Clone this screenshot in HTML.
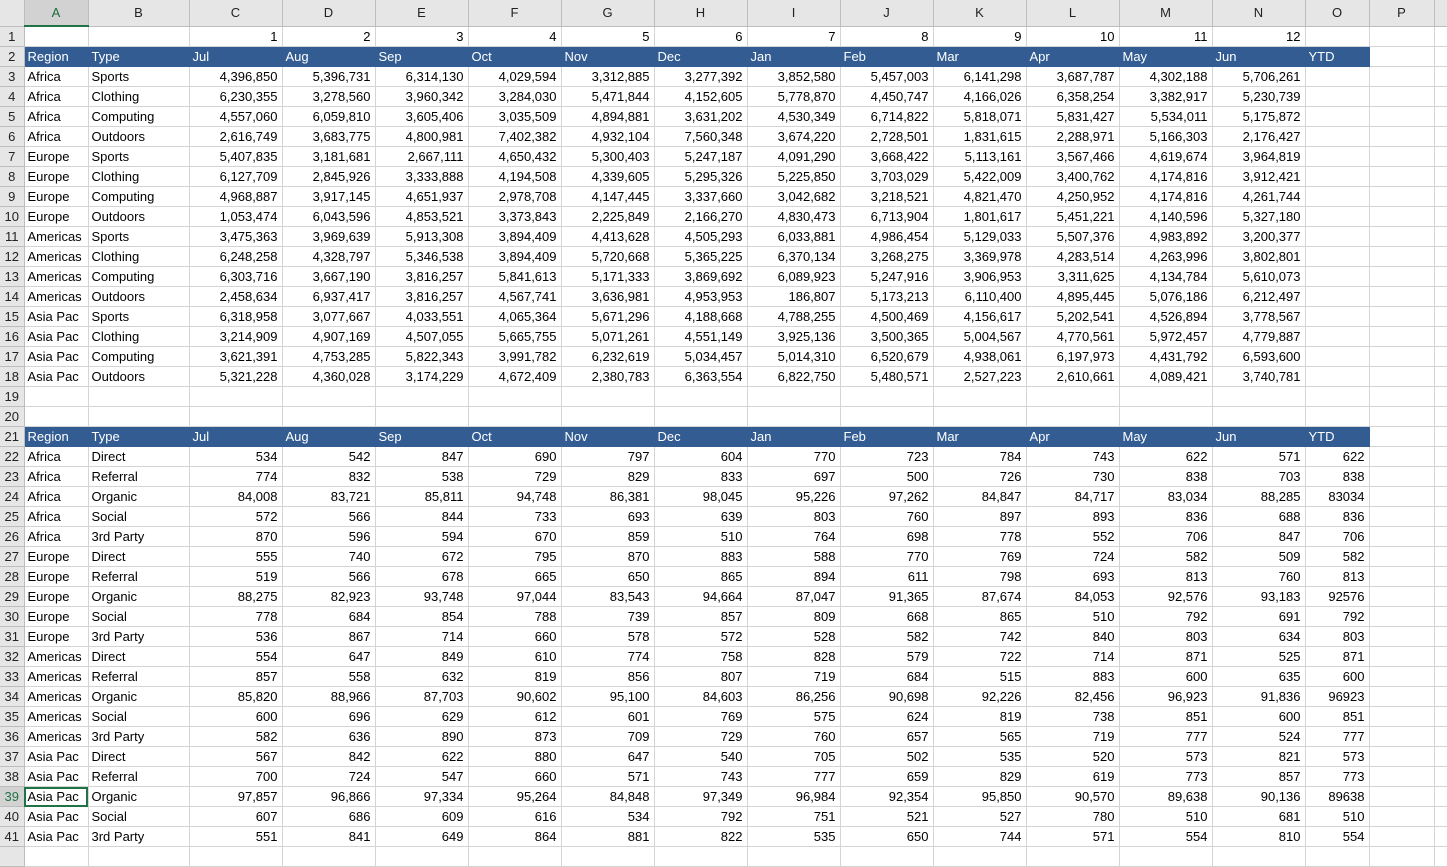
<!DOCTYPE html>
<html><head><meta charset="utf-8"><style>
body{margin:0;width:1447px;height:849px;overflow:hidden;background:#fff;font-family:"Liberation Sans",Arial,sans-serif;font-size:13px;color:#000}
table{border-collapse:collapse;table-layout:fixed;position:absolute;left:0;top:0}
td{height:19px;padding:0 4px;border-right:1px solid #d4d4d4;border-bottom:1px solid #d4d4d4;white-space:nowrap;overflow:hidden;text-align:right;line-height:19px}
td.l{text-align:left;padding-left:3px}
tr.h td{background:#335d92;color:#fff;text-align:left;padding-left:3px;border-color:#335d92}
tr.h td.e{background:#fff;border-color:#d4d4d4}
tr.ch td{height:25px;background:#e6e6e6;text-align:center;border-color:#bdbdbd;color:#222;font-size:13px}
tr.ch td.sel{background:#d2d2d2;color:#1e6b3a;border-bottom:2px solid #217346}
td.rh, tr.h td.rh{background:#e6e6e6;text-align:center;padding:0;border-color:#bdbdbd;color:#222}
td.rs{background:#d2d2d2;color:#217346}
td.x{border-right:none}
</style></head><body>
<table>
<colgroup><col style="width:24px"><col style="width:64px"><col style="width:101px"><col style="width:93px"><col style="width:93px"><col style="width:93px"><col style="width:93px"><col style="width:93px"><col style="width:93px"><col style="width:93px"><col style="width:93px"><col style="width:93px"><col style="width:93px"><col style="width:93px"><col style="width:93px"><col style="width:64px"><col style="width:65px"><col style="width:13px"></colgroup>
<tr class="ch"><td></td><td class="sel">A</td><td>B</td><td>C</td><td>D</td><td>E</td><td>F</td><td>G</td><td>H</td><td>I</td><td>J</td><td>K</td><td>L</td><td>M</td><td>N</td><td>O</td><td>P</td><td class="x"></td></tr>
<tr><td class="rh">1</td><td></td><td></td><td>1</td><td>2</td><td>3</td><td>4</td><td>5</td><td>6</td><td>7</td><td>8</td><td>9</td><td>10</td><td>11</td><td>12</td><td></td><td></td><td class="x"></td></tr>
<tr class="h"><td class="rh">2</td><td>Region</td><td>Type</td><td>Jul</td><td>Aug</td><td>Sep</td><td>Oct</td><td>Nov</td><td>Dec</td><td>Jan</td><td>Feb</td><td>Mar</td><td>Apr</td><td>May</td><td>Jun</td><td>YTD</td><td class="e"></td><td class="e x"></td></tr>
<tr><td class="rh">3</td><td class="l">Africa</td><td class="l">Sports</td><td>4,396,850</td><td>5,396,731</td><td>6,314,130</td><td>4,029,594</td><td>3,312,885</td><td>3,277,392</td><td>3,852,580</td><td>5,457,003</td><td>6,141,298</td><td>3,687,787</td><td>4,302,188</td><td>5,706,261</td><td></td><td></td><td class="x"></td></tr>
<tr><td class="rh">4</td><td class="l">Africa</td><td class="l">Clothing</td><td>6,230,355</td><td>3,278,560</td><td>3,960,342</td><td>3,284,030</td><td>5,471,844</td><td>4,152,605</td><td>5,778,870</td><td>4,450,747</td><td>4,166,026</td><td>6,358,254</td><td>3,382,917</td><td>5,230,739</td><td></td><td></td><td class="x"></td></tr>
<tr><td class="rh">5</td><td class="l">Africa</td><td class="l">Computing</td><td>4,557,060</td><td>6,059,810</td><td>3,605,406</td><td>3,035,509</td><td>4,894,881</td><td>3,631,202</td><td>4,530,349</td><td>6,714,822</td><td>5,818,071</td><td>5,831,427</td><td>5,534,011</td><td>5,175,872</td><td></td><td></td><td class="x"></td></tr>
<tr><td class="rh">6</td><td class="l">Africa</td><td class="l">Outdoors</td><td>2,616,749</td><td>3,683,775</td><td>4,800,981</td><td>7,402,382</td><td>4,932,104</td><td>7,560,348</td><td>3,674,220</td><td>2,728,501</td><td>1,831,615</td><td>2,288,971</td><td>5,166,303</td><td>2,176,427</td><td></td><td></td><td class="x"></td></tr>
<tr><td class="rh">7</td><td class="l">Europe</td><td class="l">Sports</td><td>5,407,835</td><td>3,181,681</td><td>2,667,111</td><td>4,650,432</td><td>5,300,403</td><td>5,247,187</td><td>4,091,290</td><td>3,668,422</td><td>5,113,161</td><td>3,567,466</td><td>4,619,674</td><td>3,964,819</td><td></td><td></td><td class="x"></td></tr>
<tr><td class="rh">8</td><td class="l">Europe</td><td class="l">Clothing</td><td>6,127,709</td><td>2,845,926</td><td>3,333,888</td><td>4,194,508</td><td>4,339,605</td><td>5,295,326</td><td>5,225,850</td><td>3,703,029</td><td>5,422,009</td><td>3,400,762</td><td>4,174,816</td><td>3,912,421</td><td></td><td></td><td class="x"></td></tr>
<tr><td class="rh">9</td><td class="l">Europe</td><td class="l">Computing</td><td>4,968,887</td><td>3,917,145</td><td>4,651,937</td><td>2,978,708</td><td>4,147,445</td><td>3,337,660</td><td>3,042,682</td><td>3,218,521</td><td>4,821,470</td><td>4,250,952</td><td>4,174,816</td><td>4,261,744</td><td></td><td></td><td class="x"></td></tr>
<tr><td class="rh">10</td><td class="l">Europe</td><td class="l">Outdoors</td><td>1,053,474</td><td>6,043,596</td><td>4,853,521</td><td>3,373,843</td><td>2,225,849</td><td>2,166,270</td><td>4,830,473</td><td>6,713,904</td><td>1,801,617</td><td>5,451,221</td><td>4,140,596</td><td>5,327,180</td><td></td><td></td><td class="x"></td></tr>
<tr><td class="rh">11</td><td class="l">Americas</td><td class="l">Sports</td><td>3,475,363</td><td>3,969,639</td><td>5,913,308</td><td>3,894,409</td><td>4,413,628</td><td>4,505,293</td><td>6,033,881</td><td>4,986,454</td><td>5,129,033</td><td>5,507,376</td><td>4,983,892</td><td>3,200,377</td><td></td><td></td><td class="x"></td></tr>
<tr><td class="rh">12</td><td class="l">Americas</td><td class="l">Clothing</td><td>6,248,258</td><td>4,328,797</td><td>5,346,538</td><td>3,894,409</td><td>5,720,668</td><td>5,365,225</td><td>6,370,134</td><td>3,268,275</td><td>3,369,978</td><td>4,283,514</td><td>4,263,996</td><td>3,802,801</td><td></td><td></td><td class="x"></td></tr>
<tr><td class="rh">13</td><td class="l">Americas</td><td class="l">Computing</td><td>6,303,716</td><td>3,667,190</td><td>3,816,257</td><td>5,841,613</td><td>5,171,333</td><td>3,869,692</td><td>6,089,923</td><td>5,247,916</td><td>3,906,953</td><td>3,311,625</td><td>4,134,784</td><td>5,610,073</td><td></td><td></td><td class="x"></td></tr>
<tr><td class="rh">14</td><td class="l">Americas</td><td class="l">Outdoors</td><td>2,458,634</td><td>6,937,417</td><td>3,816,257</td><td>4,567,741</td><td>3,636,981</td><td>4,953,953</td><td>186,807</td><td>5,173,213</td><td>6,110,400</td><td>4,895,445</td><td>5,076,186</td><td>6,212,497</td><td></td><td></td><td class="x"></td></tr>
<tr><td class="rh">15</td><td class="l">Asia Pac</td><td class="l">Sports</td><td>6,318,958</td><td>3,077,667</td><td>4,033,551</td><td>4,065,364</td><td>5,671,296</td><td>4,188,668</td><td>4,788,255</td><td>4,500,469</td><td>4,156,617</td><td>5,202,541</td><td>4,526,894</td><td>3,778,567</td><td></td><td></td><td class="x"></td></tr>
<tr><td class="rh">16</td><td class="l">Asia Pac</td><td class="l">Clothing</td><td>3,214,909</td><td>4,907,169</td><td>4,507,055</td><td>5,665,755</td><td>5,071,261</td><td>4,551,149</td><td>3,925,136</td><td>3,500,365</td><td>5,004,567</td><td>4,770,561</td><td>5,972,457</td><td>4,779,887</td><td></td><td></td><td class="x"></td></tr>
<tr><td class="rh">17</td><td class="l">Asia Pac</td><td class="l">Computing</td><td>3,621,391</td><td>4,753,285</td><td>5,822,343</td><td>3,991,782</td><td>6,232,619</td><td>5,034,457</td><td>5,014,310</td><td>6,520,679</td><td>4,938,061</td><td>6,197,973</td><td>4,431,792</td><td>6,593,600</td><td></td><td></td><td class="x"></td></tr>
<tr><td class="rh">18</td><td class="l">Asia Pac</td><td class="l">Outdoors</td><td>5,321,228</td><td>4,360,028</td><td>3,174,229</td><td>4,672,409</td><td>2,380,783</td><td>6,363,554</td><td>6,822,750</td><td>5,480,571</td><td>2,527,223</td><td>2,610,661</td><td>4,089,421</td><td>3,740,781</td><td></td><td></td><td class="x"></td></tr>
<tr><td class="rh">19</td><td></td><td></td><td></td><td></td><td></td><td></td><td></td><td></td><td></td><td></td><td></td><td></td><td></td><td></td><td></td><td></td><td class="x"></td></tr>
<tr><td class="rh">20</td><td></td><td></td><td></td><td></td><td></td><td></td><td></td><td></td><td></td><td></td><td></td><td></td><td></td><td></td><td></td><td></td><td class="x"></td></tr>
<tr class="h"><td class="rh">21</td><td>Region</td><td>Type</td><td>Jul</td><td>Aug</td><td>Sep</td><td>Oct</td><td>Nov</td><td>Dec</td><td>Jan</td><td>Feb</td><td>Mar</td><td>Apr</td><td>May</td><td>Jun</td><td>YTD</td><td class="e"></td><td class="e x"></td></tr>
<tr><td class="rh">22</td><td class="l">Africa</td><td class="l">Direct</td><td>534</td><td>542</td><td>847</td><td>690</td><td>797</td><td>604</td><td>770</td><td>723</td><td>784</td><td>743</td><td>622</td><td>571</td><td>622</td><td></td><td class="x"></td></tr>
<tr><td class="rh">23</td><td class="l">Africa</td><td class="l">Referral</td><td>774</td><td>832</td><td>538</td><td>729</td><td>829</td><td>833</td><td>697</td><td>500</td><td>726</td><td>730</td><td>838</td><td>703</td><td>838</td><td></td><td class="x"></td></tr>
<tr><td class="rh">24</td><td class="l">Africa</td><td class="l">Organic</td><td>84,008</td><td>83,721</td><td>85,811</td><td>94,748</td><td>86,381</td><td>98,045</td><td>95,226</td><td>97,262</td><td>84,847</td><td>84,717</td><td>83,034</td><td>88,285</td><td>83034</td><td></td><td class="x"></td></tr>
<tr><td class="rh">25</td><td class="l">Africa</td><td class="l">Social</td><td>572</td><td>566</td><td>844</td><td>733</td><td>693</td><td>639</td><td>803</td><td>760</td><td>897</td><td>893</td><td>836</td><td>688</td><td>836</td><td></td><td class="x"></td></tr>
<tr><td class="rh">26</td><td class="l">Africa</td><td class="l">3rd Party</td><td>870</td><td>596</td><td>594</td><td>670</td><td>859</td><td>510</td><td>764</td><td>698</td><td>778</td><td>552</td><td>706</td><td>847</td><td>706</td><td></td><td class="x"></td></tr>
<tr><td class="rh">27</td><td class="l">Europe</td><td class="l">Direct</td><td>555</td><td>740</td><td>672</td><td>795</td><td>870</td><td>883</td><td>588</td><td>770</td><td>769</td><td>724</td><td>582</td><td>509</td><td>582</td><td></td><td class="x"></td></tr>
<tr><td class="rh">28</td><td class="l">Europe</td><td class="l">Referral</td><td>519</td><td>566</td><td>678</td><td>665</td><td>650</td><td>865</td><td>894</td><td>611</td><td>798</td><td>693</td><td>813</td><td>760</td><td>813</td><td></td><td class="x"></td></tr>
<tr><td class="rh">29</td><td class="l">Europe</td><td class="l">Organic</td><td>88,275</td><td>82,923</td><td>93,748</td><td>97,044</td><td>83,543</td><td>94,664</td><td>87,047</td><td>91,365</td><td>87,674</td><td>84,053</td><td>92,576</td><td>93,183</td><td>92576</td><td></td><td class="x"></td></tr>
<tr><td class="rh">30</td><td class="l">Europe</td><td class="l">Social</td><td>778</td><td>684</td><td>854</td><td>788</td><td>739</td><td>857</td><td>809</td><td>668</td><td>865</td><td>510</td><td>792</td><td>691</td><td>792</td><td></td><td class="x"></td></tr>
<tr><td class="rh">31</td><td class="l">Europe</td><td class="l">3rd Party</td><td>536</td><td>867</td><td>714</td><td>660</td><td>578</td><td>572</td><td>528</td><td>582</td><td>742</td><td>840</td><td>803</td><td>634</td><td>803</td><td></td><td class="x"></td></tr>
<tr><td class="rh">32</td><td class="l">Americas</td><td class="l">Direct</td><td>554</td><td>647</td><td>849</td><td>610</td><td>774</td><td>758</td><td>828</td><td>579</td><td>722</td><td>714</td><td>871</td><td>525</td><td>871</td><td></td><td class="x"></td></tr>
<tr><td class="rh">33</td><td class="l">Americas</td><td class="l">Referral</td><td>857</td><td>558</td><td>632</td><td>819</td><td>856</td><td>807</td><td>719</td><td>684</td><td>515</td><td>883</td><td>600</td><td>635</td><td>600</td><td></td><td class="x"></td></tr>
<tr><td class="rh">34</td><td class="l">Americas</td><td class="l">Organic</td><td>85,820</td><td>88,966</td><td>87,703</td><td>90,602</td><td>95,100</td><td>84,603</td><td>86,256</td><td>90,698</td><td>92,226</td><td>82,456</td><td>96,923</td><td>91,836</td><td>96923</td><td></td><td class="x"></td></tr>
<tr><td class="rh">35</td><td class="l">Americas</td><td class="l">Social</td><td>600</td><td>696</td><td>629</td><td>612</td><td>601</td><td>769</td><td>575</td><td>624</td><td>819</td><td>738</td><td>851</td><td>600</td><td>851</td><td></td><td class="x"></td></tr>
<tr><td class="rh">36</td><td class="l">Americas</td><td class="l">3rd Party</td><td>582</td><td>636</td><td>890</td><td>873</td><td>709</td><td>729</td><td>760</td><td>657</td><td>565</td><td>719</td><td>777</td><td>524</td><td>777</td><td></td><td class="x"></td></tr>
<tr><td class="rh">37</td><td class="l">Asia Pac</td><td class="l">Direct</td><td>567</td><td>842</td><td>622</td><td>880</td><td>647</td><td>540</td><td>705</td><td>502</td><td>535</td><td>520</td><td>573</td><td>821</td><td>573</td><td></td><td class="x"></td></tr>
<tr><td class="rh">38</td><td class="l">Asia Pac</td><td class="l">Referral</td><td>700</td><td>724</td><td>547</td><td>660</td><td>571</td><td>743</td><td>777</td><td>659</td><td>829</td><td>619</td><td>773</td><td>857</td><td>773</td><td></td><td class="x"></td></tr>
<tr><td class="rh rs">39</td><td class="l" style="outline:2px solid #217346;outline-offset:-2px">Asia Pac</td><td class="l">Organic</td><td>97,857</td><td>96,866</td><td>97,334</td><td>95,264</td><td>84,848</td><td>97,349</td><td>96,984</td><td>92,354</td><td>95,850</td><td>90,570</td><td>89,638</td><td>90,136</td><td>89638</td><td></td><td class="x"></td></tr>
<tr><td class="rh">40</td><td class="l">Asia Pac</td><td class="l">Social</td><td>607</td><td>686</td><td>609</td><td>616</td><td>534</td><td>792</td><td>751</td><td>521</td><td>527</td><td>780</td><td>510</td><td>681</td><td>510</td><td></td><td class="x"></td></tr>
<tr><td class="rh">41</td><td class="l">Asia Pac</td><td class="l">3rd Party</td><td>551</td><td>841</td><td>649</td><td>864</td><td>881</td><td>822</td><td>535</td><td>650</td><td>744</td><td>571</td><td>554</td><td>810</td><td>554</td><td></td><td class="x"></td></tr>
<tr><td class="rh"></td><td></td><td></td><td></td><td></td><td></td><td></td><td></td><td></td><td></td><td></td><td></td><td></td><td></td><td></td><td></td><td></td><td class="x"></td></tr>
</table>
</body></html>
